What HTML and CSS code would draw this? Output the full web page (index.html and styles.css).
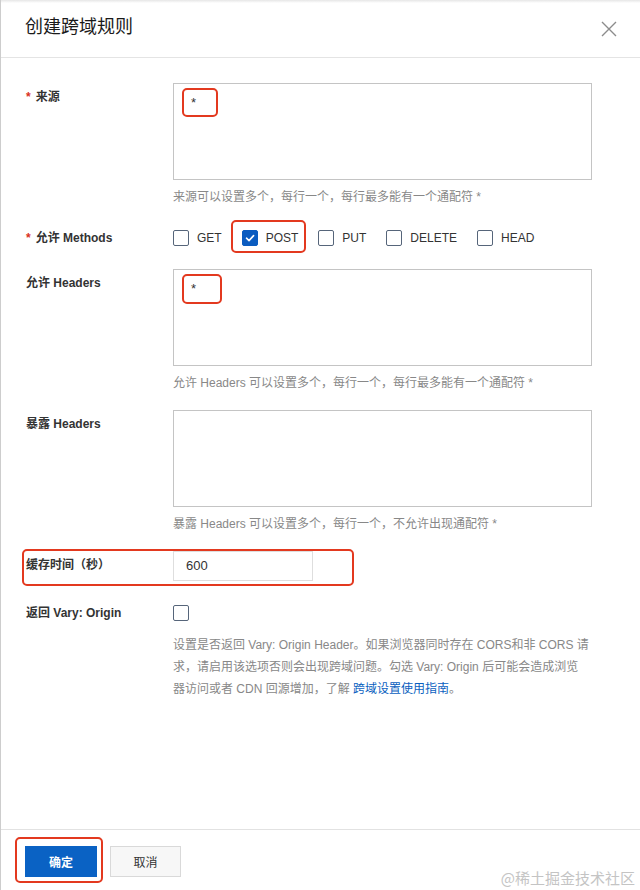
FILE: index.html
```html
<!DOCTYPE html>
<html lang="zh-CN">
<head>
<meta charset="utf-8">
<title>创建跨域规则</title>
<link rel="stylesheet" href="styles.css">
</head>
<body>
<div class="dialog">
  <header class="dialog-header">
    <h1 class="dialog-title">创建跨域规则</h1>
    <button class="close" aria-label="关闭">
      <svg width="16" height="16" viewBox="0 0 16 16"><path d="M1 1L15 15M15 1L1 15" stroke="#8c8c8c" stroke-width="1.4" fill="none"/></svg>
    </button>
  </header>
  <main class="dialog-body">
    <div class="form-item">
      <label class="form-label"><span class="req">*</span>来源</label>
      <div class="form-control">
        <div class="textarea"><span class="mark">*</span></div>
        <p class="help">来源可以设置多个，每行一个，每行最多能有一个通配符 *</p>
      </div>
    </div>

    <div class="form-item methods">
      <label class="form-label"><span class="req">*</span>允许 Methods</label>
      <div class="checks">
        <span class="check"><span class="box"></span>GET</span>
        <span class="check marked"><span class="box checked"><svg width="14" height="14" viewBox="0 0 14 14"><path d="M3.5 7.2L6 9.6L10.6 4.6" stroke="#fff" stroke-width="1.6" fill="none" stroke-linecap="round" stroke-linejoin="round"/></svg></span>POST</span>
        <span class="check"><span class="box"></span>PUT</span>
        <span class="check"><span class="box"></span>DELETE</span>
        <span class="check"><span class="box"></span>HEAD</span>
      </div>
    </div>

    <div class="form-item">
      <label class="form-label">允许 Headers</label>
      <div class="form-control">
        <div class="textarea"><span class="mark mark-lg">*</span></div>
        <p class="help">允许 Headers 可以设置多个，每行一个，每行最多能有一个通配符 *</p>
      </div>
    </div>

    <div class="form-item">
      <label class="form-label">暴露 Headers</label>
      <div class="form-control">
        <div class="textarea"></div>
        <p class="help">暴露 Headers 可以设置多个，每行一个，不允许出现通配符 *</p>
      </div>
    </div>

    <div class="form-item cache">
      <label class="form-label">缓存时间（秒）</label>
      <div class="form-control">
        <div class="input">600</div>
      </div>
    </div>

    <div class="form-item">
      <label class="form-label">返回 Vary: Origin</label>
      <div class="form-control">
        <div class="checks"><span class="box"></span></div>
        <p class="help help-para">设置是否返回 Vary: Origin Header。如果浏览器同时存在 CORS和非 CORS 请<br>求，请启用该选项否则会出现跨域问题。勾选 Vary: Origin 后可能会造成浏览<br>器访问或者 CDN 回源增加，了解 <a class="link" href="#">跨域设置使用指南</a>。</p>
      </div>
    </div>
  </main>
  <footer class="dialog-footer">
    <button class="btn btn-primary">确定</button>
    <button class="btn btn-default">取消</button>
  </footer>
  <div class="watermark">@稀土掘金技术社区</div>
</div>
</body>
</html>
```
FILE: styles.css
```css
* { box-sizing: border-box; }

body {
  margin: 0;
  background: #fff;
  color: #333;
  font-family: "Liberation Sans", "Noto Sans CJK SC", sans-serif;
}

.dialog {
  position: relative;
  height: 890px;
  display: flex;
  flex-direction: column;
  border-left: 1px solid #cdcdcd;
}

.dialog-header {
  height: 58px;
  flex: none;
  display: flex;
  justify-content: space-between;
  align-items: flex-start;
  padding: 13px 23px 0 24px;
  border-bottom: 1px solid #e4e4e4;
  background: linear-gradient(#e6e6e6, #ffffff 3px);
}

.dialog-title {
  margin: 0;
  font-size: 18px;
  font-weight: 400;
  line-height: 24px;
  color: #1a1a1a;
  font-family: "Noto Sans CJK SC", sans-serif;
}

.close {
  margin-top: 8px;
  padding: 0;
  border: none;
  background: none;
  width: 16px;
  height: 16px;
  display: block;
}
.close svg { display: block; }

.dialog-body {
  flex: 1;
  padding: 25px 0 0 25px;
}

.form-item {
  display: grid;
  grid-template-columns: 147px 419px;
  align-items: start;
  margin-bottom: 18px;
}
.form-item.methods { margin-bottom: 17px; }

.form-label {
  display: block;
  height: 28px;
  font-size: 12px;
  font-weight: 700;
  line-height: 28px;
  color: #333;
  white-space: nowrap;
}

.req {
  color: #d9301f;
  margin-right: 5px;
}

.textarea {
  height: 97px;
  border: 1px solid #c4c4c4;
  padding: 4px 8px;
}

.mark {
  display: inline-block;
  vertical-align: top;
  width: 36px;
  height: 29px;
  border: 2px solid #e3391f;
  border-radius: 5px;
  padding-left: 7px;
  font-size: 13px;
  line-height: 25px;
  color: #333;
}
.mark-lg {
  width: 40px;
  height: 30px;
}

.help {
  margin: 8px 0 0;
  height: 18px;
  font-size: 12px;
  line-height: 18px;
  color: #888;
  white-space: nowrap;
}

.help-para {
  margin-top: 7px;
  height: 66px;
  line-height: 22px;
}

.link {
  color: #0a5fc0;
  text-decoration: none;
}

.checks {
  display: flex;
  align-items: center;
  height: 28px;
}

.check {
  position: relative;
  display: flex;
  align-items: center;
  margin-right: 20px;
  font-size: 12px;
  color: #333;
}

.box {
  width: 16px;
  height: 16px;
  flex: none;
  border: 1px solid #56657a;
  border-radius: 2px;
  margin-right: 8px;
  display: flex;
  align-items: center;
  justify-content: center;
  background: #fff;
}
.box.checked {
  background: #0b5cc0;
  border-color: #0b5cc0;
}
.box svg { display: block; }

.check.marked::after,
.cache::after,
.btn-primary::after {
  content: "";
  position: absolute;
  border: 2px solid #e3391f;
  border-radius: 5px;
  pointer-events: none;
}
.check.marked::after {
  left: -11px;
  right: -8px;
  top: -10px;
  bottom: -7px;
}

.cache { position: relative; }
.cache::after {
  left: -4px;
  top: -2px;
  width: 328px;
  bottom: -5px;
}

.input {
  width: 140px;
  height: 30px;
  border: 1px solid #dedede;
  padding: 0 12px;
  font-size: 13px;
  line-height: 28px;
  color: #333;
}

.dialog-footer {
  height: 61px;
  flex: none;
  border-top: 1px solid #e2e2e2;
  padding: 16px 0 0 24px;
  display: flex;
  align-items: flex-start;
  gap: 13px;
}

.btn {
  position: relative;
  width: 72px;
  height: 31px;
  font-size: 12px;
  font-family: "Noto Sans CJK SC", sans-serif;
  border: 1px solid;
  padding: 0;
}
.btn-primary {
  background: #0a62c4;
  border-color: #0a62c4;
  color: #fff;
  font-weight: 700;
}
.btn-primary::after {
  left: -11px;
  right: -7px;
  top: -10px;
  bottom: -7px;
}
.btn-default {
  width: 71px;
  background: #f7f7f7;
  border-color: #d9d9d9;
  color: #333;
}

.watermark {
  position: absolute;
  right: 5px;
  bottom: 2px;
  font-size: 15px;
  line-height: 20px;
  color: #c4c4c4;
  font-family: "Noto Sans CJK SC", sans-serif;
}
```
